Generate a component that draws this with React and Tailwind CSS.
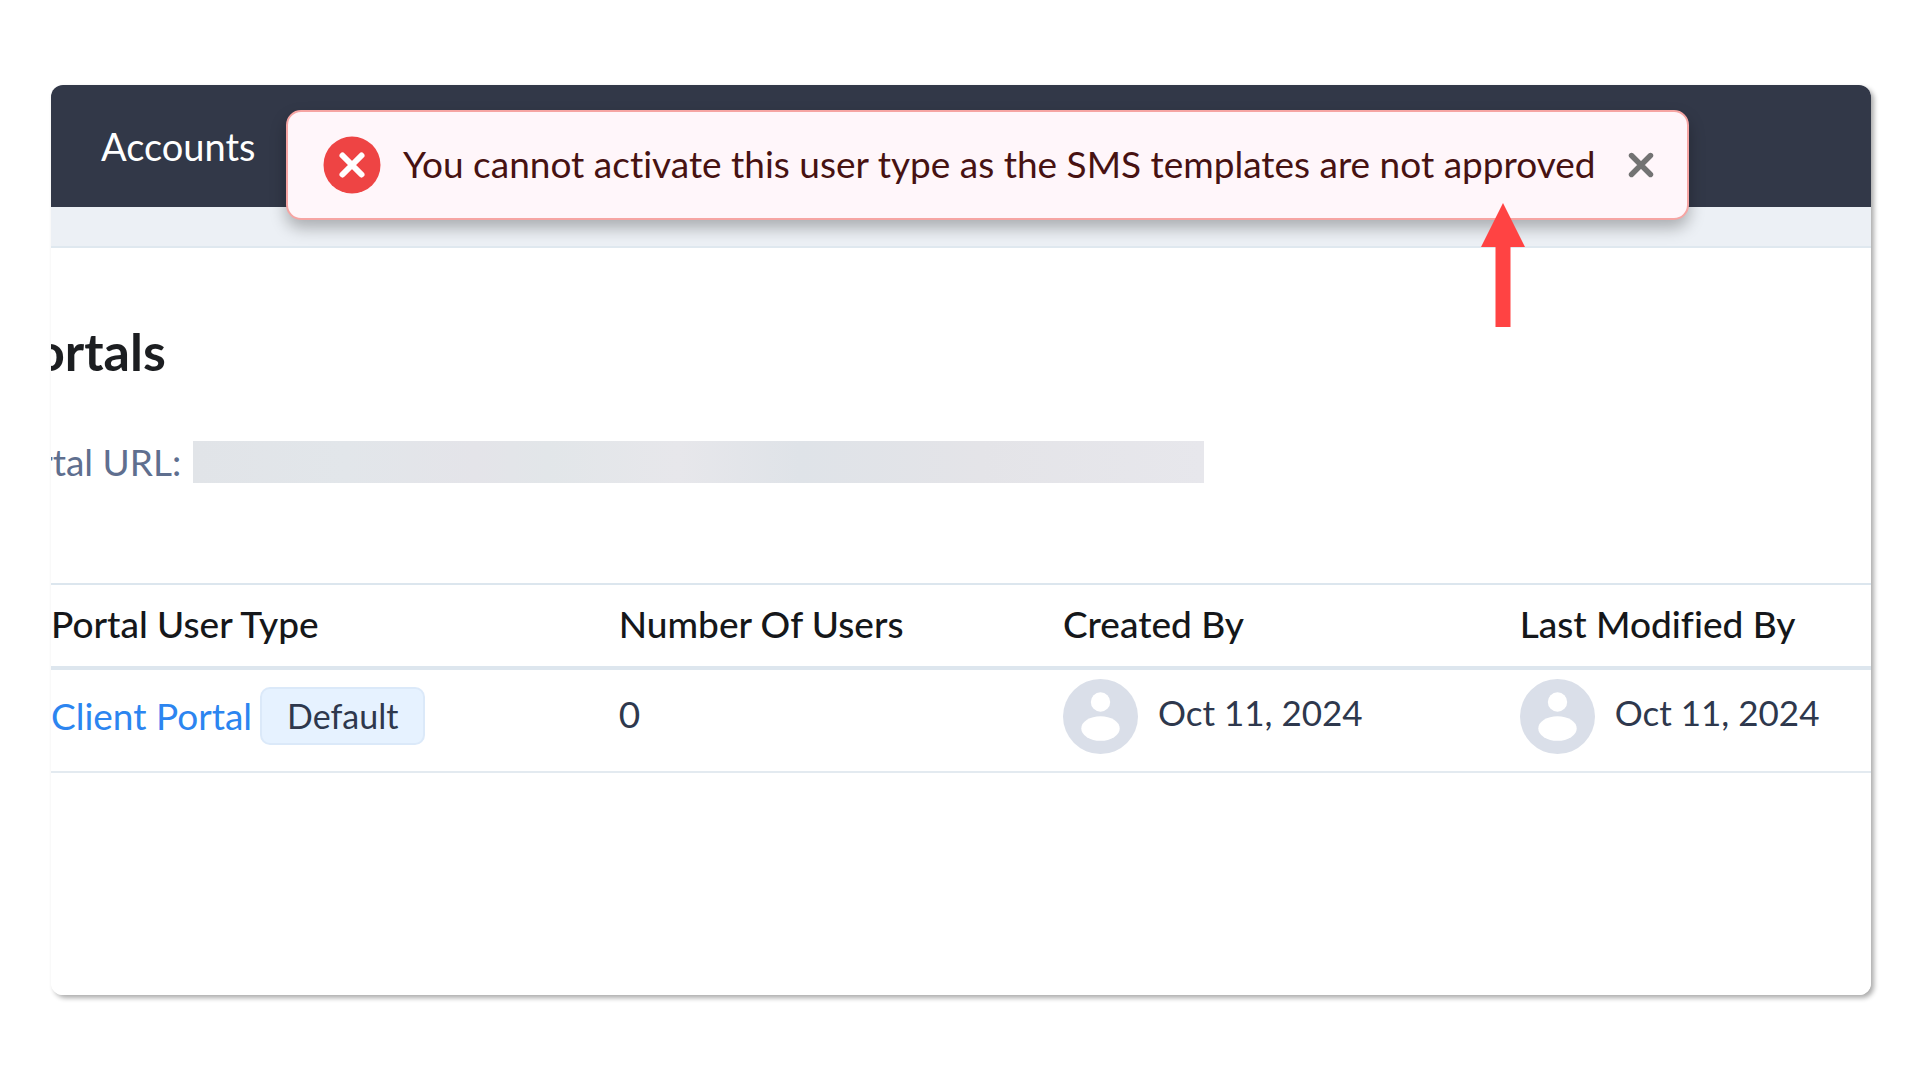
function ErrorIcon() {
  return (
    <svg viewBox="0 0 58 58" className="size-[58px] shrink-0" aria-hidden="true">
      <circle cx="29" cy="29" r="28.5" fill="#ee4444" />
      <path d="M19.5 19.5 38.5 38.5M38.5 19.5 19.5 38.5" stroke="#fff" strokeWidth="6" strokeLinecap="round" />
    </svg>
  );
}

function CloseIcon() {
  return (
    <svg viewBox="0 0 26 26" className="size-[26px]" aria-hidden="true">
      <path d="M3.5 3.5 22.5 22.5M22.5 3.5 3.5 22.5" stroke="#737373" strokeWidth="5.4" strokeLinecap="round" />
    </svg>
  );
}

function Avatar() {
  return (
    <svg viewBox="0 0 75 75" className="size-[75px] shrink-0" aria-hidden="true">
      <circle cx="37.5" cy="37.5" r="37.5" fill="#dadfe9" />
      <circle cx="37.5" cy="23" r="9.7" fill="#fff" />
      <ellipse cx="37.5" cy="49.5" rx="19.2" ry="12.3" fill="#fff" />
    </svg>
  );
}

function PointerArrow() {
  return (
    <svg viewBox="0 0 44 124" className="absolute left-[79.8%] top-[118px] h-[124px] w-[44px] -translate-x-1/2" aria-hidden="true">
      <path d="M22 0 44 44H29.5V124H14.5V44H0Z" fill="#ff4343" />
    </svg>
  );
}

function Alert() {
  return (
    <div
      role="alert"
      className="absolute left-[235px] right-[182px] top-[25px] flex h-[110px] items-center rounded-[15px] border-2 border-[#f6a5a3] bg-[#fff6fa] pl-[35px] pr-[33px] shadow-[0_8px_16px_rgba(0,0,0,0.28)]"
    >
      <ErrorIcon />
      <p className="ml-[22px] grow whitespace-nowrap pb-[3px] text-[#471212]">
        You cannot activate this user type as the SMS templates are not approved
      </p>
      <button type="button" aria-label="Close">
        <CloseIcon />
      </button>
    </div>
  );
}

function DateCell({ date }) {
  return (
    <td className="p-0 align-top">
      <div className="flex items-start gap-[20px] pt-[9px]">
        <Avatar />
        <span className="mt-[11px] whitespace-nowrap text-[35px]">{date}</span>
      </div>
    </td>
  );
}

const columns = ["Portal User Type", "Number Of Users", "Created By", "Last Modified By"];

export default function App() {
  return (
    <main className="flex min-h-screen flex-col bg-white pb-[85px] pl-[51px] pr-[49px] pt-[85px] font-['Lato',sans-serif] text-[37px]/[44px] text-[#2e384d] [font-variant-ligatures:none]">
      <div className="flex grow flex-col rounded-[12px] shadow-[3px_3px_5px_rgba(0,0,0,0.33)]">
        <div className="relative grow overflow-hidden rounded-[12px] bg-white">
          <header className="flex h-[122px] items-center bg-[#323848] pl-[50px]">
            <a href="#accounts" className="text-[38px] text-white">Accounts</a>
          </header>
          <div className="h-[41px] border-b-2 border-[#dfe8ef] bg-[#ecf0f5]" />

          <h1 className="-ml-[47px] mt-[71px] text-[52px] font-bold leading-[64px] text-[#1c1e21]">Portals</h1>
          <div className="-ml-[54px] mt-[57px] flex items-center">
            <span className="whitespace-nowrap text-[#5f6f8f]">Portal URL:</span>
            <span className="ml-[12px] h-[42px] w-[1011px] bg-linear-[90deg,#e1e4e8,#e2e6ea_15%,#e4e4e9_28%,#e2e6e9_35%,#e7e7eb_48%,#dfe3e8_60%,#e4e4e8_78%,#e7e7ec]" />
          </div>

          <table className="mt-[99px] w-full table-fixed border-separate border-spacing-0 text-left">
            <colgroup>
              <col className="w-[31.2%]" />
              <col className="w-[24.4%]" />
              <col className="w-[25.1%]" />
              <col />
            </colgroup>
            <thead>
              <tr className="text-[#15171a]">
                {columns.map((c) => (
                  <th key={c} scope="col" className="h-[87px] whitespace-nowrap border-b-4 border-t-2 border-b-[#dde6ee] border-t-[#dce6ee] p-0 pb-[3px] font-medium">
                    {c}
                  </th>
                ))}
              </tr>
            </thead>
            <tbody className="[&_td]:h-[103px] [&_td]:border-b-2 [&_td]:border-[#e3eaf0]">
              <tr>
                <td className="p-0 align-top">
                  <div className="flex items-center gap-[8px] pt-[17px]">
                    <a href="#client-portal" className="whitespace-nowrap text-[#2c85f0]">Client Portal</a>
                    <span className="rounded-[10px] border-2 border-[#dbe9f9] bg-[#e6f2ff] px-[25px] py-[5px] text-[34px]">Default</span>
                  </div>
                </td>
                <td className="p-0 align-top">
                  <div className="pt-[22px]">0</div>
                </td>
                <DateCell date="Oct 11, 2024" />
                <DateCell date="Oct 11, 2024" />
              </tr>
            </tbody>
          </table>

          <Alert />
          <PointerArrow />
        </div>
      </div>
    </main>
  );
}
